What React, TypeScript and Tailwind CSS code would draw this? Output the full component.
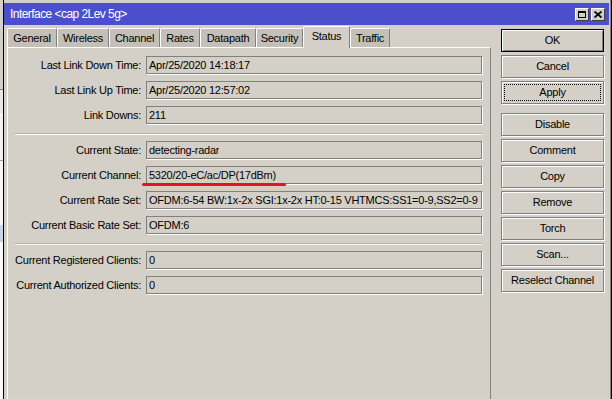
import React from 'react'

type Row = { label: string; value: string; mark?: boolean }

const groups: Row[][] = [
  [
    { label: 'Last Link Down Time:', value: 'Apr/25/2020 14:18:17' },
    { label: 'Last Link Up Time:', value: 'Apr/25/2020 12:57:02' },
    { label: 'Link Downs:', value: '211' },
  ],
  [
    { label: 'Current State:', value: 'detecting-radar' },
    { label: 'Current Channel:', value: '5320/20-eC/ac/DP(17dBm)', mark: true },
    { label: 'Current Rate Set:', value: 'OFDM:6-54 BW:1x-2x SGI:1x-2x HT:0-15 VHTMCS:SS1=0-9,SS2=0-9' },
    { label: 'Current Basic Rate Set:', value: 'OFDM:6' },
  ],
  [
    { label: 'Current Registered Clients:', value: '0' },
    { label: 'Current Authorized Clients:', value: '0' },
  ],
]

const tabs = [
  { name: 'General', w: 'w-[50px]' },
  { name: 'Wireless', w: 'w-[52px]' },
  { name: 'Channel', w: 'w-[51px]' },
  { name: 'Rates', w: 'w-[40px]' },
  { name: 'Datapath', w: 'w-[56px]' },
  { name: 'Security', w: 'w-[47px]' },
  { name: 'Status', w: 'w-[47px]', active: true },
  { name: 'Traffic', w: 'w-[40px]' },
]

function Field({ row }: { row: Row }) {
  return (
    <div className="flex h-[18px] items-center gap-[5px]">
      <div className="w-[133px] whitespace-nowrap text-right">{row.label}</div>
      <div className="relative flex h-[18px] flex-1 items-center border border-[#808080] px-[2px] shadow-[1px_1px_0_#fff]">
        <span className="overflow-hidden whitespace-nowrap">{row.value}</span>
        {row.mark && (
          <div className="absolute left-[-5px] top-[16px] h-[3px] w-[144px] rounded-full bg-[#e4141c]" />
        )}
      </div>
    </div>
  )
}

function Separator() {
  return <div className="mb-[6px] ml-[7px] mt-[9px] h-[2px] border-b border-t border-b-white border-t-[#b5b1a8]" />
}

function Button({ label, kind }: { label: string; kind?: 'default' | 'focus' }) {
  if (kind === 'default') {
    return (
      <div className="flex h-[23px] items-center justify-center border border-black shadow-[inset_1px_1px_0_#fff,inset_-1px_-1px_0_#808080]">
        {label}
      </div>
    )
  }
  return (
    <div className="relative flex h-[23px] items-center justify-center border border-[#808080] shadow-[inset_1px_1px_0_#fff,1px_1px_0_#fff]">
      {label}
      {kind === 'focus' && <div className="absolute inset-[2px] border border-dotted border-black" />}
    </div>
  )
}

export default function App() {
  return (
    <div className="flex h-[399px] w-[612px] overflow-hidden bg-[#d4d0c8] font-['Liberation_Sans',Arial,sans-serif] text-[11px] tracking-[-0.25px] text-black">
      {/* desktop behind the window */}
      <div className="flex w-[3px] flex-col">
        <div className="h-[89px] bg-[#d4d0c8]" />
        <div className="h-[25px] border-t border-[#808080] bg-[#e8e8e8]" />
        <div className="h-[46px] border-t border-white bg-[#f2f2f2]" />
        <div className="h-[65px] border-t border-[#a0a0a0] bg-[#f6f6f6]" />
        <div className="h-[16px] bg-[#c8d4ea]" />
        <div className="flex-1 border-t border-[#d0d0d0] bg-[#fafafa]" />
      </div>

      {/* window */}
      <div className="flex flex-1 flex-col border-x border-black">
        <div className="flex flex-1 flex-col border-r border-[#808080] pt-[3px]">
          {/* title bar */}
          <div className="mr-[1px] flex h-[22px] items-center justify-between bg-[#4b4fcb] pl-[6px] pr-[4px]">
            <span className="text-[12px] tracking-[-0.55px] text-white">Interface &lt;cap 2Lev 5g&gt;</span>
            <div className="flex gap-[2px]">
              <div className="flex h-[13px] w-[14px] items-center justify-center border border-b-[#404040] border-l-white border-r-[#404040] border-t-white bg-[#d4d0c8]">
                <div className="h-[7px] w-[8px] border border-t-2 border-black" />
              </div>
              <div className="flex h-[13px] w-[14px] items-center justify-center border border-b-[#404040] border-l-white border-r-[#404040] border-t-white bg-[#d4d0c8]">
                <svg width="8" height="7" viewBox="0 0 8 7">
                  <path d="M0.5 0.5 L7.5 6.5 M7.5 0.5 L0.5 6.5" stroke="#000" strokeWidth="1.8" />
                </svg>
              </div>
            </div>
          </div>

          {/* body */}
          <div className="flex flex-1 gap-[10px] pl-[3px]">
            <div className="flex w-[484px] flex-col pt-[1px]">
              <div className="flex h-[21px] items-end">
                {tabs.map((t) =>
                  t.active ? (
                    <div
                      key={t.name}
                      className={`${t.w} relative z-10 -mb-px flex h-[22px] items-center justify-center rounded-t-[2px] border-l border-r border-t border-l-white border-r-[#808080] border-t-white bg-[#d4d0c8] pb-[3px]`}
                    >
                      {t.name}
                    </div>
                  ) : (
                    <div
                      key={t.name}
                      className={`${t.w} flex h-[19px] items-center justify-center rounded-t-[2px] border-l border-r border-t border-l-white border-r-[#808080] border-t-white bg-[#c4c0b8]`}
                    >
                      {t.name}
                    </div>
                  ),
                )}
              </div>
              <div className="flex flex-1 flex-col border-l border-r border-t border-l-white border-r-[#808080] border-t-white pr-[8px] pt-[8px]">
                {groups.map((g, gi) => (
                  <React.Fragment key={gi}>
                    {gi > 0 && <Separator />}
                    <div className="flex flex-col gap-[7px]">
                      {g.map((r) => (
                        <Field key={r.label} row={r} />
                      ))}
                    </div>
                  </React.Fragment>
                ))}
              </div>
            </div>

            <div className="flex w-[103px] flex-col gap-[3px] pt-[4px]">
              <Button label="OK" kind="default" />
              <Button label="Cancel" />
              <Button label="Apply" kind="focus" />
              <div className="mt-[6px]">
                <Button label="Disable" />
              </div>
              <Button label="Comment" />
              <Button label="Copy" />
              <Button label="Remove" />
              <Button label="Torch" />
              <Button label="Scan..." />
              <Button label="Reselect Channel" />
            </div>
          </div>
        </div>
      </div>
    </div>
  )
}
